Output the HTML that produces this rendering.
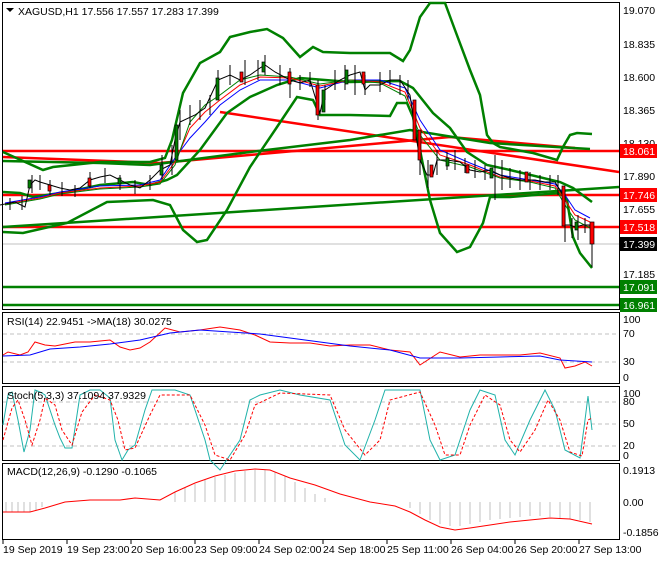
<!DOCTYPE html>
<html><head><meta charset="utf-8"><style>
body{margin:0;background:#fff;width:660px;height:560px;overflow:hidden;font-family:"Liberation Sans",sans-serif}
svg text{font-family:"Liberation Sans",sans-serif;font-size:10.5px}
</style></head><body>
<svg width="660" height="560" viewBox="0 0 660 560" xmlns="http://www.w3.org/2000/svg">
<rect width="660" height="560" fill="#fff"/>
<g fill="none" stroke="#000" stroke-width="1">
<rect x="2.5" y="2.5" width="617" height="307"/>
<rect x="2.5" y="312.5" width="617" height="71"/>
<rect x="2.5" y="386.5" width="617" height="74"/>
<rect x="2.5" y="463.5" width="617" height="76"/>
</g>
<line x1="3" y1="244" x2="619" y2="244" stroke="#c0c0c0"/>
<g stroke="#ff0000" stroke-width="2.5" fill="none">
<line x1="3" y1="151" x2="619" y2="151"/>
<line x1="3" y1="195" x2="619" y2="195"/>
<line x1="3" y1="227" x2="619" y2="227"/>
<line x1="220" y1="112" x2="619" y2="172"/>
<polyline points="3,157 160,163 450,137 575,148"/>
</g>
<g stroke="#008000" stroke-width="2.5" fill="none">
<line x1="3" y1="287" x2="619" y2="287"/>
<line x1="3" y1="305" x2="619" y2="305"/>
<line x1="3" y1="227" x2="619" y2="187"/>
<polyline points="3,161 100,163 150,165 250,152 350,140 410,130 490,143 590,149"/>
<polyline points="3,152 43,170 53,167 100,162 150,162 165,158 172,140 183,93 200,63 220,52 230,37 250,32 267,29 283,38 300,57 313,47 323,52 350,53 390,53 403,61 410,50 420,17 430,3 445,3 455,30 470,70 480,95 487,135 493,143 500,147 533,153 557,160 563,147 570,135 577,133 592,134"/>
<polyline points="3,232 23,233 67,223 107,202 153,200 170,205 183,230 197,242 207,240 227,210 250,167 277,127 297,97 313,100 320,115 350,115 390,116 397,103 407,103 413,117 420,150 430,200 440,233 457,252 470,247 483,223 490,197 510,197 560,193 567,200 573,237 580,253 592,268"/>
<polyline points="3,192 20,193 33,197 67,192 100,185 133,182 150,185 167,180 177,175 200,150 227,113 250,97 277,85 300,78 350,82 400,81 413,88 433,113 450,128 467,152 487,165 510,170 560,182 573,188 592,202"/>
</g>
<g fill="none" stroke-width="1">
<polyline stroke="#0000ff" points="5,203 40,197 60,192 100,186 140,185 160,180 175,158 190,138 205,122 220,105 240,90 260,80 290,80 320,88 350,80 380,80 405,88 420,120 440,150 470,163 500,175 530,180 555,184 565,195 575,210 590,218"/>
<polyline stroke="#ff0000" points="5,204 40,198 60,193 100,188 140,186 160,182 175,162 190,128 205,112 220,100 240,85 260,77 290,78 320,86 350,80 380,82 405,92 420,128 440,155 470,165 500,177 530,181 555,186 565,200 575,215 590,222"/>
<polyline stroke="#008000" points="5,205 40,199 60,194 100,189 140,187 160,184 175,165 190,122 205,105 220,95 240,80 260,75 290,77 320,84 350,80 380,83 405,96 420,135 440,160 470,167 500,178 530,182 555,188 565,205 575,220 590,228"/>
</g>
<polyline fill="none" stroke="#000" stroke-width="1" points="0,205 15,202 25,207 30,185 35,180 40,182 50,185 60,188 70,190 80,188 90,180 100,177 110,175 120,180 130,185 140,188 150,180 160,170 170,165 175,140 180,122 195,115 205,108 218,80 230,75 240,80 250,75 260,68 265,65 275,72 290,80 300,83 310,80 320,113 325,90 340,80 350,75 360,72 365,90 370,85 380,85 390,80 400,80 410,95 415,130 420,160 427,175 433,175 437,160 447,160 460,162 470,170 480,172 490,170 500,175 510,178 520,180 535,180 545,182 555,182 563,195 565,225 570,225 575,227 583,225 590,225 592,243"/>
<g stroke="#000" stroke-width="1">
<path d="M10,198v12M22,196v14M32,175v18M40,175v15M50,180v15M62,182v14M75,185v12M90,172v16M105,168v15M120,175v15M135,180v14M150,175v15M162,155v25M172,145v30M180,110v30M190,105v20M200,100v20M210,95v20M218,70v30M230,65v20M245,60v25M258,60v20M265,55v20M280,65v20M290,68v30M300,75v15M310,72v15M318,80v40M325,85v15M335,70v20M345,65v25M355,65v30M365,75v20M380,72v20M390,70v15M400,75v20M408,80v20M415,100v40M420,140v35M428,160v28M437,150v25M447,152v18M455,150v20M465,158v15M475,160v18M485,165v15M495,155v45M502,160v30M510,168v20M520,170v20M530,172v18M540,175v15M550,175v15M558,175v20M565,190v52M572,218v20M578,215v25M585,218v15M592,222v45"/>
</g>
<g stroke="#000" stroke-width="0.7">
<rect x="28" y="180" width="3" height="8" fill="#008000"/><rect x="48" y="185" width="3" height="6" fill="#ff0000"/>
<rect x="88" y="178" width="3" height="8" fill="#ff0000"/><rect x="118" y="178" width="3" height="6" fill="#008000"/>
<rect x="160" y="165" width="3" height="10" fill="#008000"/><rect x="175" y="125" width="3" height="35" fill="#008000"/>
<rect x="216" y="78" width="3" height="22" fill="#008000"/><rect x="240" y="72" width="3" height="10" fill="#ff0000"/>
<rect x="262" y="62" width="3" height="10" fill="#008000"/><rect x="288" y="72" width="3" height="12" fill="#ff0000"/>
<rect x="316" y="85" width="3" height="30" fill="#ff0000"/><rect x="322" y="90" width="3" height="22" fill="#008000"/>
<rect x="345" y="70" width="3" height="14" fill="#008000"/><rect x="362" y="72" width="3" height="12" fill="#ff0000"/>
<rect x="413" y="100" width="3" height="40" fill="#ff0000"/><rect x="418" y="130" width="3" height="30" fill="#ff0000"/>
<rect x="430" y="165" width="3" height="12" fill="#ff0000"/><rect x="446" y="158" width="3" height="8" fill="#008000"/>
<rect x="466" y="165" width="3" height="8" fill="#ff0000"/><rect x="490" y="168" width="3" height="10" fill="#008000"/>
<rect x="525" y="172" width="3" height="10" fill="#ff0000"/><rect x="562" y="186" width="3" height="40" fill="#ff0000"/>
<rect x="575" y="222" width="3" height="8" fill="#008000"/><rect x="590" y="222" width="4" height="22" fill="#ff0000"/>
</g>
<g fill="#000">
<text x="623" y="14">19.070</text><text x="623" y="48">18.835</text><text x="623" y="81">18.600</text>
<text x="623" y="114">18.365</text><text x="623" y="147">18.130</text><text x="623" y="180">17.890</text>
<text x="623" y="213">17.655</text><text x="623" y="278">17.185</text>
</g>
<rect x="620" y="144" width="37" height="14" fill="#ff0000"/><text x="623" y="155" fill="#fff">18.061</text>
<rect x="620" y="188" width="37" height="14" fill="#ff0000"/><text x="623" y="199" fill="#fff">17.746</text>
<rect x="620" y="220" width="37" height="14" fill="#ff0000"/><text x="623" y="231" fill="#fff">17.518</text>
<rect x="620" y="237" width="37" height="14" fill="#000"/><text x="623" y="248" fill="#fff">17.399</text>
<rect x="620" y="280" width="37" height="14" fill="#008000"/><text x="623" y="291" fill="#fff">17.091</text>
<rect x="620" y="298" width="37" height="14" fill="#008000"/><text x="623" y="309" fill="#fff">16.961</text>
<path d="M6,8h8l-4,4z" fill="#000"/>
<text x="18" y="15" fill="#000">XAGUSD,H1  17.556 17.557 17.283 17.399</text>
<!-- RSI -->
<g stroke="#c0c0c0" stroke-dasharray="4,3"><line x1="3" y1="334" x2="619" y2="334"/><line x1="3" y1="362" x2="619" y2="362"/></g>
<polyline fill="none" stroke="#ff0000" points="3,355 8,352 20,355 28,352 35,342 45,345 55,346 75,342 90,342 110,340 120,347 130,350 140,348 150,342 165,328 180,332 200,330 220,327 240,330 255,335 270,342 290,343 310,343 330,346 350,345 370,345 390,350 410,352 420,365 440,352 460,357 480,355 500,355 520,355 540,353 560,358 565,368 575,366 585,362 592,366"/>
<polyline fill="none" stroke="#0000ff" points="3,356 30,355 50,349 80,347 110,344 140,340 170,333 200,330 230,332 260,334 290,338 320,342 350,346 390,350 420,358 460,358 500,357 540,356 560,360 592,362"/>
<text x="7" y="325">RSI(14) 22.9451  -&gt;MA(18) 30.0275</text>
<g fill="#000"><text x="623" y="323">100</text><text x="623" y="337">70</text><text x="623" y="365">30</text><text x="623" y="381">0</text></g>
<!-- Stoch -->
<g stroke="#c0c0c0" stroke-dasharray="4,3"><line x1="3" y1="402" x2="619" y2="402"/><line x1="3" y1="424" x2="619" y2="424"/><line x1="3" y1="446" x2="619" y2="446"/></g>
<polyline fill="none" stroke="#20b2aa" points="3,425 8,395 12,392 18,420 24,452 30,430 35,390 40,392 45,395 55,425 60,438 65,448 72,448 80,395 90,390 100,390 110,398 115,440 122,460 128,450 135,445 145,410 152,390 160,390 175,390 190,395 205,440 210,460 220,470 230,455 240,440 250,400 260,395 280,390 300,395 330,400 345,445 360,460 375,420 385,390 400,390 420,390 430,440 440,460 455,455 470,410 480,390 495,395 505,440 515,455 530,420 545,390 555,410 565,450 580,458 585,420 588,396 592,430"/>
<polyline fill="none" stroke="#ff0000" stroke-dasharray="3,2" points="3,440 12,408 18,400 25,420 32,445 40,420 45,398 55,405 62,430 72,445 82,412 95,395 110,400 118,420 125,450 135,448 150,415 160,395 190,395 205,425 215,455 230,460 245,435 255,405 280,393 330,395 345,430 365,455 380,440 390,400 420,392 435,425 445,455 460,455 470,425 485,395 500,405 510,440 520,452 535,430 548,400 560,420 570,452 582,456 588,420 592,418"/>
<text x="7" y="399">Stoch(5,3,3) 37.1094 37.9329</text>
<g fill="#000"><text x="623" y="397">100</text><text x="623" y="405">80</text><text x="623" y="427">50</text><text x="623" y="449">20</text><text x="623" y="459">0</text></g>
<!-- MACD -->
<g stroke="#c0c0c0"><path d="M6,502v10M12,502v10M18,502v10M24,502v10M30,502v10M36,502v8M42,502v5M175,502v-10M185,502v-14M195,502v-18M205,502v-22M215,502v-25M225,502v-27M235,502v-29M245,502v-31M255,502v-32M265,502v-32M275,502v-30M285,502v-26M295,502v-20M305,502v-14M315,502v-8M325,502v-4M410,502v6M420,502v12M430,502v18M440,502v22M450,502v24M460,502v24M470,502v22M480,502v20M490,502v18M500,502v17M510,502v16M520,502v15M530,502v14M540,502v14M550,502v15M560,502v16M570,502v17M580,502v18M590,502v20"/></g>
<polyline fill="none" stroke="#ff0000" points="3,512 30,512 45,508 65,502 90,500 120,500 135,498 160,500 175,492 195,483 215,476 235,471 255,469 270,470 290,478 315,485 340,494 370,502 395,506 410,512 425,520 440,527 455,530 470,528 490,525 510,522 530,520 550,518 570,519 592,524"/>
<text x="7" y="475">MACD(12,26,9) -0.1290 -0.1065</text>
<g fill="#000"><text x="623" y="474">0.1913</text><text x="623" y="506">0.00</text><text x="623" y="536">-0.1856</text></g>
<g stroke="#000"><path d="M3,540v4M67,540v4M131,540v4M195,540v4M259,540v4M323,540v4M387,540v4M451,540v4M515,540v4M579,540v4"/></g>
<g fill="#000" style="font-size:10px"><text x="3" y="553">19 Sep 2019</text><text x="67" y="553">19 Sep 23:00</text><text x="131" y="553">20 Sep 16:00</text><text x="195" y="553">23 Sep 09:00</text><text x="259" y="553">24 Sep 02:00</text><text x="323" y="553">24 Sep 18:00</text><text x="387" y="553">25 Sep 11:00</text><text x="451" y="553">26 Sep 04:00</text><text x="515" y="553">26 Sep 20:00</text><text x="579" y="553">27 Sep 13:00</text></g>
</svg>
</body></html>
